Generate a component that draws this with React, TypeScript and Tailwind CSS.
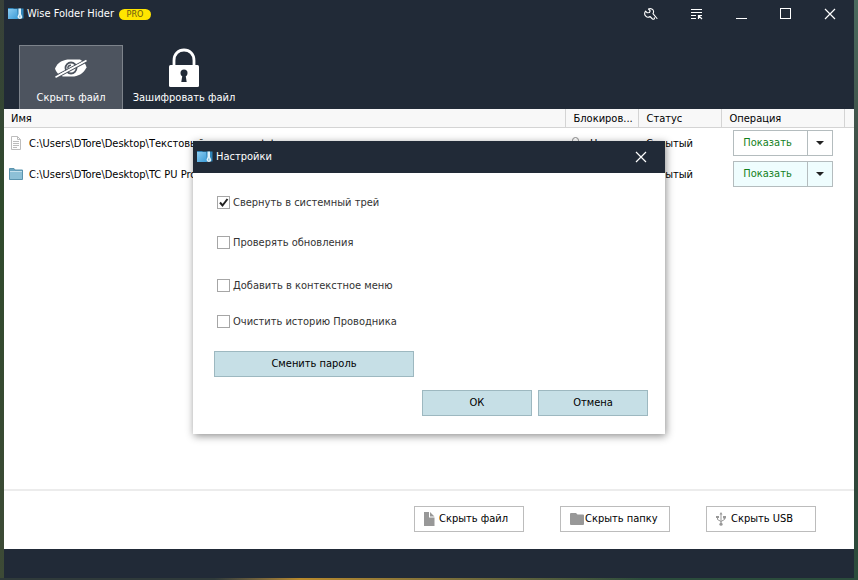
import { useState } from 'react'
import type { ReactNode } from 'react'

const files = [
  { path: 'C:\\Users\\DTore\\Desktop\\Текстовый документ.txt', kind: 'file', locked: 'Нет', status: 'Скрытый' },
  { path: 'C:\\Users\\DTore\\Desktop\\TC PU Project', kind: 'folder', locked: '', status: 'Скрытый' },
]

function AppIcon() {
  return (
    <svg width="16" height="14" viewBox="0 0 16 14" aria-hidden="true">
      <defs>
        <linearGradient id="folderBlue" x1="0" y1="0" x2="1" y2="1">
          <stop offset="0" stopColor="#8ccdf2" />
          <stop offset="1" stopColor="#3a9ad6" />
        </linearGradient>
      </defs>
      <path d="M0 1h5l1 .5h9.500v10H0z" fill="#2f83b8" />
      <path d="M0 2h9l1 10H0z" fill="url(#folderBlue)" />
      <path d="M10.500 1.500h2.500v5.500l1.200 2.500c0 1.800-.8 2.500-2.200 2.500s-2.500-.8-2.500-2.500l1-2.500z" fill="#dff1fa" />
      <path d="M11.300 8.500h1v2h-1z" fill="#5fa9d2" />
    </svg>
  )
}

function CloseIcon() {
  return (
    <svg width="12" height="12" viewBox="0 0 12 12" fill="none" stroke="#fff" strokeWidth="1.2" aria-hidden="true">
      <path d="M1 1l10 10M11 1L1 11" />
    </svg>
  )
}

function HiddenEyeIcon() {
  return (
    <svg width="34" height="22" viewBox="0 0 34 22" aria-hidden="true">
      <path d="M1 11.500C4 5 9 2.500 16 2.500h10c3 1.500 6 4.500 6.500 8C29 17 24 19.500 18 19.500H9c-3.500-1-7-4-8-8z" fill="#fff" />
      <circle cx="17" cy="11" r="5.500" fill="none" stroke="#4d545f" strokeWidth="1.800" />
      <path d="M13.800 11.500c0-2 1.400-3.300 3.200-3.300" fill="none" stroke="#4d545f" strokeWidth="1.400" />
      <path d="M2 21.200L33 4.700" stroke="#4d545f" strokeWidth="1.500" />
      <path d="M1 19L32 2.500" stroke="#4d545f" strokeWidth="1.200" />
      <path d="M1.500 20.200L32.500 3.500" stroke="#fff" strokeWidth="1.600" />
    </svg>
  )
}

function LockIcon() {
  return (
    <svg width="30" height="40" viewBox="0 0 30 40" aria-hidden="true">
      <path d="M5 18V12.500C5 6 9.500 2 15 2s10 4 10 10.500V18" fill="none" stroke="#fff" strokeWidth="2.800" />
      <rect x="0" y="17" width="30" height="22" rx="1.500" fill="#fff" />
      <circle cx="15" cy="25" r="3.500" fill="#212a37" />
      <path d="M13.500 26.500h3l1.200 7.500h-5.400z" fill="#212a37" />
    </svg>
  )
}

function WrenchIcon() {
  return (
    <svg width="14" height="12" viewBox="0 0 14 12" fill="none" stroke="#fff" strokeWidth="1.100" strokeLinejoin="round" strokeLinecap="round" aria-hidden="true">
      <path d="M4.500 1C6.800 0 9.500 1.200 9.600 3.600c0 .9-.2 1.500-.6 2l4 4.900M4.500 1L6.200 2.800 5.500 4.500 3.200 4.800 1.600 3.200C.4 4.800.4 6.800 1.800 8.200c1.200 1.200 2.900 1.200 4.200.3l2.500 2.500c1.200.8 2.300-.2 1.800-1.300" />
    </svg>
  )
}

function MenuIcon() {
  return (
    <svg width="12" height="12" viewBox="0 0 12 12" fill="none" stroke="#fff" aria-hidden="true">
      <path d="M0 1.500h11M0 4.500h11M0 7.500h5M0 10.500h5M7.500 11V7.500H11M7.500 7.500l3.500 3.500" strokeWidth="1.200" />
    </svg>
  )
}

function RowIcon({ kind }: { kind: string }) {
  if (kind === 'folder') {
    return (
      <svg width="14" height="12" viewBox="0 0 14 12" aria-hidden="true">
        <path d="M.5 11.500V.5H5l1 1.500h7.500v9.500z" fill="#6ba5c0" stroke="#5b94ae" />
        <path d="M1 4h12v7H1z" fill="#8dc0d6" />
        <path d="M1 3.500h12" stroke="#c3e0ec" />
      </svg>
    )
  }
  return (
    <svg width="14" height="14" viewBox="0 0 14 14" fill="none" stroke="#bdbdbd" aria-hidden="true">
      <path d="M2.500.5h6l3 3v10h-9zM8.500.5v3h3M4 5.500h6M4 7.500h6M4 9.500h6M4 11.500h4" />
    </svg>
  )
}

function SmallLock() {
  return (
    <svg width="9" height="12" viewBox="0 0 9 12" fill="none" stroke="#8a8a8a" aria-hidden="true">
      <path d="M1.500 5V3.500a3 3 0 0 1 6 0V5" />
      <path d="M.5 4.500h8v7h-8z" fill="#bbb" />
    </svg>
  )
}

function FileGlyph() {
  return (
    <svg width="11" height="14" viewBox="0 0 11 14" fill="#989898" aria-hidden="true">
      <path d="M0 0h5v5.500h5.500V14H0zM6 0l4.500 4.500H6z" />
    </svg>
  )
}

function FolderGlyph() {
  return (
    <svg width="15" height="12" viewBox="0 0 15 12" fill="#989898" aria-hidden="true">
      <path d="M1 0h5l1.500 1.500H13a1 1 0 0 1 1 1V11a1 1 0 0 1-1 1H1a1 1 0 0 1-1-1V1a1 1 0 0 1 1-1z" />
    </svg>
  )
}

function UsbGlyph() {
  return (
    <svg width="10" height="14" viewBox="0 0 10 14" fill="#989898" aria-hidden="true">
      <path d="M5 0l1.500 2.500h-3zM0 4h3v2H0zM7 4h3v2.500H7z" />
      <circle cx="5" cy="12.200" r="1.600" />
      <path d="M5 2v10M1.500 5v2.500L5 9.500l3.500-2V5" fill="none" stroke="#989898" />
    </svg>
  )
}

function FooterButton({ icon, label }: { icon: ReactNode; label: string }) {
  return (
    <button className="flex h-[26px] w-[110px] items-center border border-[#bcbcbc] bg-white pl-[9px] text-left">
      <span className="flex w-[15px] shrink-0">{icon}</span>
      <span className="whitespace-nowrap">{label}</span>
    </button>
  )
}

function Option({ label, checked = false, className }: { label: string; checked?: boolean; className: string }) {
  const [on, setOn] = useState(checked)
  return (
    <label className={`flex items-center gap-[3px] text-[#333] ${className}`}>
      <span className="relative flex">
        <input
          type="checkbox"
          checked={on}
          onChange={(e) => setOn(e.target.checked)}
          className="size-[13px] appearance-none border border-[#a6a6a6] bg-white"
        />
        {on && (
          <svg className="pointer-events-none absolute inset-0" width="13" height="13" viewBox="0 0 13 13" fill="none" stroke="#222" strokeWidth="2" aria-hidden="true">
            <path d="M3 6.500l2.500 3L10.500 3" />
          </svg>
        )}
      </span>
      <span className="pt-0.5">{label}</span>
    </label>
  )
}

function SettingsDialog() {
  return (
    <div
      role="dialog"
      aria-label="Настройки"
      className="w-[472px] bg-white shadow-[1px_2px_8px_rgba(0,0,0,0.45)]"
    >
      <div className="flex h-8 items-center bg-[#212a37] pl-1 pr-[18px] text-white">
        <AppIcon />
        <h2 className="ml-[3px] grow">Настройки</h2>
        <button aria-label="Закрыть настройки">
          <CloseIcon />
        </button>
      </div>
      <div className="px-6 pt-[21px]">
        <Option label="Свернуть в системный трей" checked className="h-4" />
        <Option label="Проверять обновления" className="mt-6 h-4" />
        <Option label="Добавить в контекстное меню" className="mt-[27px] h-4" />
        <Option label="Очистить историю Проводника" className="mt-5 h-4" />
      </div>
      <div className="px-[21px] pt-[22px]">
        <button className="h-[26px] w-[200px] border border-[#9db8c0] bg-[#c6dfe6]">Сменить пароль</button>
      </div>
      <div className="flex justify-end gap-1.5 px-[17px] pb-[18px] pt-[13px]">
        <button className="h-[26px] w-[110px] border border-[#9db8c0] bg-[#c6dfe6]">ОК</button>
        <button className="h-[26px] w-[110px] border border-[#9db8c0] bg-[#c6dfe6]">Отмена</button>
      </div>
    </div>
  )
}

export default function App() {
  return (
    <div className="flex min-h-screen flex-col font-['DejaVu_Sans_Condensed','DejaVu_Sans',sans-serif] text-[11px] leading-4 text-black">
      <div className="flex grow">
        {/* Desktop wallpaper on both sides of the window */}
        <div className="w-1 shrink-0 bg-linear-to-b from-[#39413a] via-[#2f4a2c] via-35% to-[#3d4a36]" />
        <div className="relative flex min-w-0 grow flex-col bg-white">
          <header className="bg-[#212a37] text-white">
            <div className="flex h-[27px] items-center pl-1 pr-[18px]">
              <AppIcon />
              <h1 className="ml-[3px] grow">
                Wise Folder Hider
                <span className="ml-[5px] inline-block h-[11px] w-8 rounded-full bg-[#ffe500] text-center text-[9px] leading-[11px] text-[#6b5a10]">PRO</span>
              </h1>
              <div className="flex items-center gap-[33px]">
                <button aria-label="Инструменты"><WrenchIcon /></button>
                <button aria-label="Меню"><MenuIcon /></button>
                <button aria-label="Свернуть" className="flex h-[11px] w-[11px] items-end">
                  <span className="h-px w-full bg-white" />
                </button>
                <button aria-label="Развернуть" className="size-[11px] border border-white" />
                <button aria-label="Закрыть"><CloseIcon /></button>
              </div>
            </div>
            <nav className="flex pl-[15px] pt-[18px]">
              <button className="flex h-16 w-[104px] flex-col items-center border border-b-0 border-[#7d838b] bg-[#4d545f]">
                <span className="flex h-11 items-center"><HiddenEyeIcon /></span>
                Скрыть файл
              </button>
              <button className="flex h-16 w-[122px] flex-col items-center">
                <span className="flex h-[45px] items-center"><LockIcon /></span>
                Зашифровать файл
              </button>
            </nav>
          </header>

          <main className="grow">
            <table className="w-full table-fixed border-collapse text-left">
              <colgroup>
                <col />
                <col className="w-[73px]" />
                <col className="w-[83px]" />
                <col className="w-[123px]" />
                <col className="w-[10px]" />
              </colgroup>
              <thead>
                <tr className="h-[18px] border-b border-[#d4d4d4] bg-[#f8f8f8]">
                  <th className="border-r border-[#d4d4d4] p-0 pl-[7px] pt-0.5 font-normal">Имя</th>
                  <th className="border-r border-[#d4d4d4] p-0 pl-2 pt-0.5 font-normal">Блокиров...</th>
                  <th className="border-r border-[#d4d4d4] p-0 pl-2 pt-0.5 font-normal">Статус</th>
                  <th className="border-r border-[#d4d4d4] p-0 pl-2 pt-0.5 font-normal">Операция</th>
                  <th className="p-0" />
                </tr>
              </thead>
              <tbody>
                {files.map((file) => (
                  <tr key={file.path} className="h-[31px]">
                    <td className="p-0 pl-[5px]">
                      <div className="flex items-center gap-1.5">
                        <RowIcon kind={file.kind} />
                        <span className="pt-0.5">{file.path}</span>
                      </div>
                    </td>
                    <td className="p-0 pl-1.5">
                      <div className="flex items-center gap-2.5">
                        <SmallLock />
                        <span className="pt-0.5">{file.locked}</span>
                      </div>
                    </td>
                    <td className="p-0 pl-2 pt-0.5">{file.status}</td>
                    <td className="p-0 pl-3">
                      <div className={`flex h-[26px] w-[100px] border border-[#b4bcbe] ${file.kind === 'folder' ? 'bg-[#effdfe]' : 'bg-white'}`}>
                        <button className="w-[74px] border-r border-[#b4bcbe] pr-1.5 text-[#12801c]">Показать</button>
                        <button aria-label="Другие действия" className="flex grow items-center justify-center">
                          <svg width="8" height="4" viewBox="0 0 8 4" aria-hidden="true"><path d="M0 0h8L4 4z" fill="#222" /></svg>
                        </button>
                      </div>
                    </td>
                    <td className="p-0" />
                  </tr>
                ))}
              </tbody>
            </table>
          </main>

          <footer>
            <div className="flex h-[60px] items-center justify-end gap-9 border-t-2 border-[#ececec] pb-0.5 pr-[38px]">
              <FooterButton icon={<FileGlyph />} label="Скрыть файл" />
              <FooterButton icon={<FolderGlyph />} label="Скрыть папку" />
              <FooterButton icon={<UsbGlyph />} label="Скрыть USB" />
            </div>
            <div className="h-[29px] bg-[#212a37]" />
          </footer>

          <div className="absolute inset-0 flex items-start justify-center pt-[141px]">
            <SettingsDialog />
          </div>
        </div>
        <div className="w-1 shrink-0 bg-linear-to-b from-[#4a6a5e] via-[#333a34] via-50% to-[#2b4c3c]" />
      </div>
      <div className="h-0.5 bg-linear-to-r from-[#2f3a3a] from-25% via-[#b98a2c] via-35% to-[#2b4c3c] to-75%" />
    </div>
  )
}
